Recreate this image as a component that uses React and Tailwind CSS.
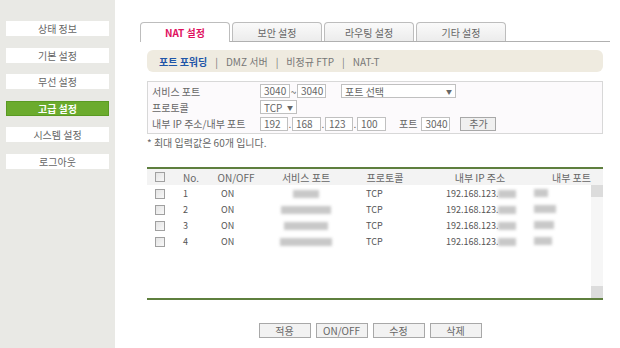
const font = { fontFamily: '"Noto Sans CJK KR", "Liberation Sans", sans-serif' };

const menu = ['상태 정보', '기본 설정', '무선 설정', '고급 설정', '시스템 설정', '로그아웃'];
const tabs = ['NAT 설정', '보안 설정', '라우팅 설정', '기타 설정'];

const Blur = ({ w }) => (
  <span className={`inline-block h-[8px] bg-[#c8c8c8] blur-[1.5px] ${w}`} />
);

const Box = () => (
  <span className="inline-block w-[10px] h-[10px] border border-[#a0a0a0] bg-gradient-to-br from-[#e4e4e4] to-[#f8f8f8]" />
);

const Input = ({ w, children }) => (
  <span className={`h-[14px] border border-[#c0c0c0] bg-white px-[3px] leading-[12px] ${w}`}>{children}</span>
);

const rows = [
  { n: 1, s: 'w-[26px]', p: 'w-[14px]' },
  { n: 2, s: 'w-[50px]', p: 'w-[22px]' },
  { n: 3, s: 'w-[44px]', p: 'w-[20px]' },
  { n: 4, s: 'w-[52px]', p: 'w-[18px]' },
];

export default function App() {
  return (
    <div style={font} className="w-[620px] h-[348px] flex bg-white text-[10px] text-[#555] overflow-hidden">
      {/* Sidebar */}
      <div className="w-[115px] bg-[#e9e9e5] pt-[21px] px-[6px] flex flex-col gap-[11.5px]">
        {menu.map((m) => (
          <div
            key={m}
            className={`h-[15px] flex items-center justify-center ${
              m === '고급 설정' ? 'bg-[#6bab2d] text-white font-bold border border-[#5a9a22]' : 'bg-white text-[#666]'
            }`}
          >
            {m}
          </div>
        ))}
      </div>

      {/* Main */}
      <div className="pl-[25px] w-[495px] flex flex-col">
        <div className="pt-[22px] flex gap-[2px] border-b border-[#b0b0b0]">
          {tabs.map((t, i) => (
            <div
              key={t}
              className={`w-[90px] h-[19px] flex items-center justify-center rounded-t-[4px] border border-b-0 border-[#bdbdbd] ${
                i === 0 ? 'bg-white text-[#e0115f] font-bold -mb-px h-[20px]' : 'bg-gradient-to-b from-[#fafafa] to-[#ececec] text-[#666]'
              }`}
            >
              {t}
            </div>
          ))}
        </div>

        <div className="px-[7px]">
          <div className="mt-[8px] h-[22px] rounded-[6px] bg-[#efebe0] flex items-center px-[12px] gap-[8px] text-[#777]">
            <span className="text-[#1f56a8] font-bold">포트 포워딩</span>
            <span>|</span>
            <span>DMZ 서버</span>
            <span>|</span>
            <span>비정규 FTP</span>
            <span>|</span>
            <span>NAT-T</span>
          </div>

          <div className="mt-[9px] h-[53px] border border-[#d8d8d8] bg-[#fcfafc] px-[4px] py-[1px] flex flex-col text-[#666]">
            <div className="h-[17px] flex items-center">
              <span className="w-[108px]">서비스 포트</span>
              <Input w="w-[30px]">3040</Input>
              <span className="w-[7px] text-center">~</span>
              <Input w="w-[29px]">3040</Input>
              <span className="ml-[15px] h-[14px] w-[115px] border border-[#c0c0c0] bg-white flex items-center justify-between px-[3px]">
                <span>포트 선택</span>
                <span className="text-[6px]">▼</span>
              </span>
            </div>
            <div className="h-[17px] flex items-center">
              <span className="w-[108px]">프로토콜</span>
              <span className="h-[14px] w-[37px] border border-[#c0c0c0] bg-white flex items-center justify-between px-[3px]">
                <span>TCP</span>
                <span className="text-[6px]">▼</span>
              </span>
            </div>
            <div className="h-[17px] flex items-center">
              <span className="w-[108px]">내부 IP 주소/내부 포트</span>
              <Input w="w-[28px]">192</Input>
              <span className="w-[4px] text-center">.</span>
              <Input w="w-[29px]">168</Input>
              <span className="w-[4px] text-center">.</span>
              <Input w="w-[28px]">123</Input>
              <span className="w-[4px] text-center">.</span>
              <Input w="w-[29px]">100</Input>
              <span className="ml-[13px] mr-[4px]">포트</span>
              <Input w="w-[29px]">3040</Input>
              <span className="ml-[10px] h-[14px] w-[36px] border border-[#a8a8a8] bg-[#f0f0f0] flex items-center justify-center">추가</span>
            </div>
          </div>

          <div className="mt-[1px] text-[#666]">* 최대 입력값은 60개 입니다.</div>

          {/* Table */}
          <div className="mt-[17px] border-t-2 border-b-2 border-[#5e7f3e]">
            <div className="grid grid-cols-[25px_38px_52px_88px_70px_120px_63px] h-[16px] items-center bg-[#f3f3f3] text-center text-[#666]">
              <span className="flex justify-center"><Box /></span>
              <span>No.</span>
              <span>ON/OFF</span>
              <span>서비스 포트</span>
              <span>프로토콜</span>
              <span>내부 IP 주소</span>
              <span>내부 포트</span>
            </div>
            <div className="flex h-[113px]">
              <div className="flex-1 pt-[1px]">
                {rows.map((r) => (
                  <div key={r.n} className="grid grid-cols-[25px_38px_52px_88px_70px_108px_63px] h-[16px] items-center text-[9px]">
                    <span className="flex justify-center"><Box /></span>
                    <span className="pl-[11px]">{r.n}</span>
                    <span className="pl-[11px]">ON</span>
                    <span className="flex justify-center"><Blur w={r.s} /></span>
                    <span className="pl-[16px]">TCP</span>
                    <span className="pl-[26px] flex items-center">192.168.123.<Blur w="w-[18px]" /></span>
                    <span className="pl-[6px]"><Blur w={r.p} /></span>
                  </div>
                ))}
              </div>
              <div className="w-[12px] bg-[#f6f6f6] flex flex-col justify-between">
                <div className="h-[12px] bg-[#dcdcdc]" />
                <div className="h-[12px] bg-[#dcdcdc]" />
              </div>
            </div>
          </div>

          <div className="mt-[23px] flex justify-center gap-[5px] pr-[10px] text-[#666]">
            {['적용', 'ON/OFF', '수정', '삭제'].map((b) => (
              <span key={b} className="w-[52px] h-[15px] border border-[#a8a8a8] bg-[#f2f2f2] flex items-center justify-center">{b}</span>
            ))}
          </div>
        </div>
      </div>
    </div>
  );
}
